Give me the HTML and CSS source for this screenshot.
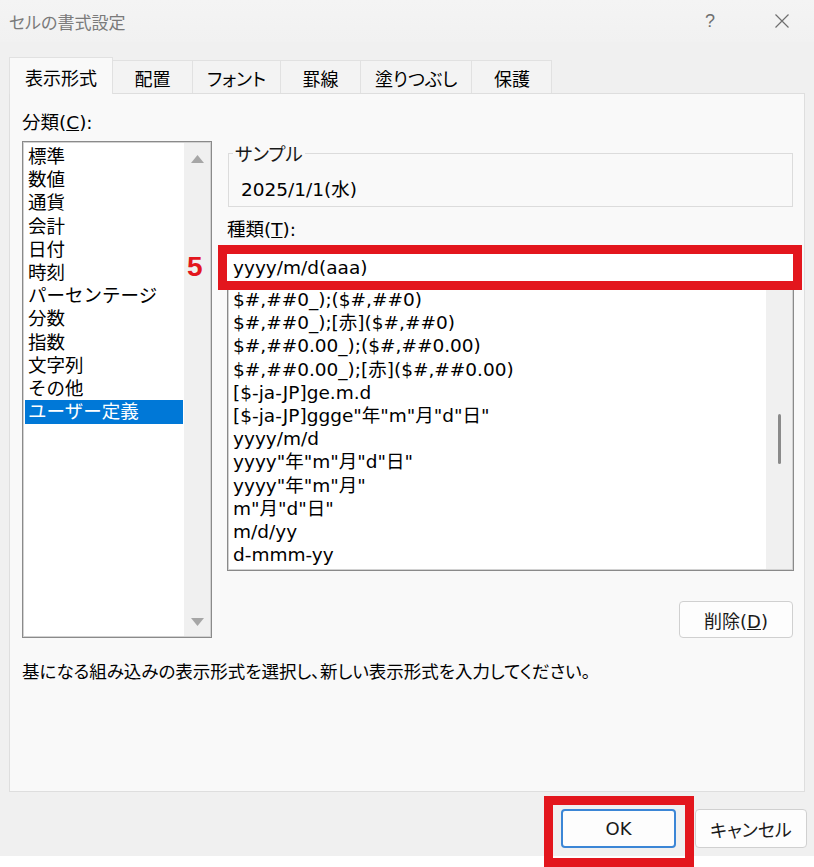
FILE: index.html
```html
<!DOCTYPE html>
<html lang="ja">
<head>
<meta charset="utf-8">
<title>セルの書式設定</title>
<link rel="stylesheet" href="styles.css">
</head>
<body>
<div class="dialog">
  <header class="titlebar">
    <span class="title">セルの書式設定</span>
    <span class="help">?</span>
    <svg class="close" viewBox="0 0 16 16" width="16" height="16"><path d="M1.5 1.5 L14.5 14.5 M14.5 1.5 L1.5 14.5" stroke="#6f6f6f" stroke-width="1.2" fill="none"/></svg>
  </header>

  <nav class="tabs">
    <div class="tab active">表示形式</div>
    <div class="tab">配置</div>
    <div class="tab">フォント</div>
    <div class="tab">罫線</div>
    <div class="tab">塗りつぶし</div>
    <div class="tab">保護</div>
  </nav>

  <section class="panel">
    <div class="cols">
      <div class="cat-col">
        <div class="label">分類(<u>C</u>):</div>
        <div class="listbox cat-list">
          <ul class="items">
            <li>標準</li>
            <li>数値</li>
            <li>通貨</li>
            <li>会計</li>
            <li>日付</li>
            <li>時刻</li>
            <li>パーセンテージ</li>
            <li>分数</li>
            <li>指数</li>
            <li>文字列</li>
            <li>その他</li>
            <li class="selected">ユーザー定義</li>
          </ul>
          <div class="vscroll">
            <svg width="13" height="8" viewBox="0 0 13 8"><path d="M6.5 0 L13 8 L0 8 Z" fill="#a6a6a6"/></svg>
            <svg width="13" height="8" viewBox="0 0 13 8"><path d="M0 0 L13 0 L6.5 8 Z" fill="#a6a6a6"/></svg>
          </div>
        </div>
      </div>

      <div class="fmt-col">
        <fieldset class="sample">
          <legend>サンプル</legend>
          <div class="sample-val">2025/1/1(水)</div>
        </fieldset>
        <div class="label type-label">種類(<u>T</u>):</div>
        <div class="input-wrap">
          <span class="step">5</span>
          <div class="input">yyyy/m/d(aaa)</div>
        </div>
        <div class="listbox fmt-list">
          <ul class="items">
            <li>$#,##0_);($#,##0)</li>
            <li>$#,##0_);[赤]($#,##0)</li>
            <li>$#,##0.00_);($#,##0.00)</li>
            <li>$#,##0.00_);[赤]($#,##0.00)</li>
            <li>[$-ja-JP]ge.m.d</li>
            <li>[$-ja-JP]ggge"年"m"月"d"日"</li>
            <li>yyyy/m/d</li>
            <li>yyyy"年"m"月"d"日"</li>
            <li>yyyy"年"m"月"</li>
            <li>m"月"d"日"</li>
            <li>m/d/yy</li>
            <li>d-mmm-yy</li>
          </ul>
          <div class="vscroll track">
            <div class="thumb"></div>
          </div>
        </div>
        <div class="del-row">
          <button class="btn del">削除(<u>D</u>)</button>
        </div>
      </div>
    </div>
    <p class="desc">基になる組み込みの表示形式を選択し、新しい表示形式を入力してください。</p>
  </section>

  <footer class="buttons">
    <button class="btn ok">OK</button>
    <button class="btn cancel">キャンセル</button>
  </footer>
</div>
</body>
</html>
```

FILE: styles.css
```css
* {
  box-sizing: border-box;
}

html,
body {
  margin: 0;
  padding: 0;
}

body {
  width: 814px;
  height: 867px;
  overflow: hidden;
  background: #ffffff;
  font-family: "DejaVu Sans", "Noto Sans CJK JP", sans-serif;
  font-size: 18px;
  color: #000;
}

.dialog {
  width: 814px;
  height: 856px;
  background: #f0f0f0;
  display: flex;
  flex-direction: column;
}

/* title bar */
.titlebar {
  height: 42px;
  flex: none;
  display: flex;
  align-items: center;
  padding-left: 9px;
  background: linear-gradient(#f4f4f4, #f1f1f1);
}

.title {
  flex: 1;
  font-family: "Noto Sans CJK JP", sans-serif;
  font-size: 17px;
  color: #7a7a7a;
  font-feature-settings: "palt";
}

.help {
  width: 20px;
  text-align: center;
  margin-right: 54px;
  font-family: "Liberation Sans", sans-serif;
  font-size: 18px;
  color: #6f6f6f;
}

.close {
  margin-right: 24px;
}

/* tabs */
.tabs {
  flex: none;
  display: flex;
  align-items: flex-end;
  height: 36px;
  margin-top: 15px;
  padding-left: 9px;
  position: relative;
  z-index: 1;
}

.tab {
  height: 33px;
  min-width: 81px;
  padding: 2px 14px 0;
  display: flex;
  align-items: center;
  justify-content: center;
  border: 1px solid #e1e1e1;
  border-bottom: none;
  margin-left: -1px;
  background: #f3f3f3;
  font-family: "Noto Sans CJK JP", sans-serif;
  font-size: 18px;
  font-feature-settings: "palt";
  white-space: nowrap;
}

.tab:first-child {
  margin-left: 0;
}

.tab.active {
  height: 37px;
  min-width: 104px;
  margin-bottom: -1px;
  background: #f9f9f9;
  padding-top: 1px;
}

/* panel */
.panel {
  flex: none;
  margin: 0 9px;
  height: 699px;
  border: 1px solid #dedede;
  background: #f9f9f9;
  padding: 17px 10px 0 12px;
}

.cols {
  display: grid;
  grid-template-columns: 190px 567px;
  column-gap: 15px;
}

.label {
  line-height: 24px;
  height: 24px;
  font-size: 18.5px;
}

.listbox {
  background: #fff;
  border: 1px solid #8a8a8a;
  box-shadow: inset 0 0 0 1px #d2d2d2;
  display: flex;
}

.items {
  list-style: none;
  margin: 0;
  flex: 1;
  min-width: 0;
  font-size: 18.5px;
  white-space: nowrap;
  overflow: hidden;
}

.items li {
  line-height: 23.2px;
  height: 23.2px;
}

.cat-list {
  margin-top: 6px;
  height: 497px;
}

.cat-list .items {
  padding: 3px 1px 0 2px;
}

.cat-list .items li {
  padding-left: 3px;
}

.cat-list .items li.selected {
  background: #0078d7;
  color: #fff;
  height: 24px;
  line-height: 24px;
}

.vscroll {
  width: 26px;
  flex: none;
  background: #f0f0f0;
  display: flex;
  flex-direction: column;
  justify-content: space-between;
  align-items: center;
  padding: 12px 0 10px;
  margin: 1px 1px 1px 0;
}

/* right column */
.fmt-col {
  padding-top: 30px;
}

.sample {
  margin: 0 1px;
  padding: 0 0 4px 12px;
  border: 1px solid #dcdcdc;
  min-width: 0;
}

.sample legend {
  padding: 0 2px;
  margin-left: -8px;
  line-height: 24px;
  font-family: "Noto Sans CJK JP", sans-serif;
  font-size: 18.5px;
  font-feature-settings: "palt";
  color: #1a1a1a;
}

.sample-val {
  margin-top: 13px;
  line-height: 24px;
  font-size: 18.5px;
}

.type-label {
  margin-top: 11px;
}

.input-wrap {
  position: relative;
  z-index: 2;
  margin: 12px 1px 0 0;
}

.input {
  height: 27px;
  line-height: 27px;
  padding-left: 6px;
  background: #fff;
  font-size: 18.5px;
  outline: 9px solid #e3161d;
}

.step {
  position: absolute;
  left: -40px;
  top: -2px;
  line-height: 30px;
  font-family: "Liberation Sans", sans-serif;
  font-weight: bold;
  font-size: 28px;
  color: #e3161d;
}

.fmt-list {
  height: 290px;
}

.fmt-list .items {
  padding: 6px 0 0 5px;
}

.track {
  justify-content: flex-start;
  padding: 131px 0 0;
}

.thumb {
  width: 3px;
  height: 50px;
  border-radius: 2px;
  background: #8a8a8a;
}

.del-row {
  display: flex;
  justify-content: flex-end;
  margin-top: 30px;
  padding-right: 1px;
}

.btn {
  height: 37px;
  border: 1px solid #d0d0d0;
  border-radius: 4px;
  background: #fdfdfd;
  font-family: "DejaVu Sans", "Noto Sans CJK JP", sans-serif;
  font-size: 18px;
  color: #1a1a1a;
  padding: 0;
  font-feature-settings: "palt";
}

.del {
  width: 114px;
}

.desc {
  margin: 21px 0 0;
  line-height: 24px;
  font-family: "Noto Sans CJK JP", sans-serif;
  font-size: 17.5px;
  font-feature-settings: "palt";
}

/* footer buttons */
.buttons {
  flex: none;
  display: flex;
  justify-content: flex-end;
  gap: 19px;
  margin-top: 17px;
  padding-right: 7px;
}

.buttons .btn {
  height: 39px;
}

.ok {
  width: 115px;
  border: 2px solid #3b86d6;
  position: relative;
}

.ok::after {
  content: "";
  position: absolute;
  left: -19px;
  right: -20px;
  top: -15px;
  bottom: -21px;
  border: 9px solid #e3161d;
}

.cancel {
  width: 112px;
}
```
